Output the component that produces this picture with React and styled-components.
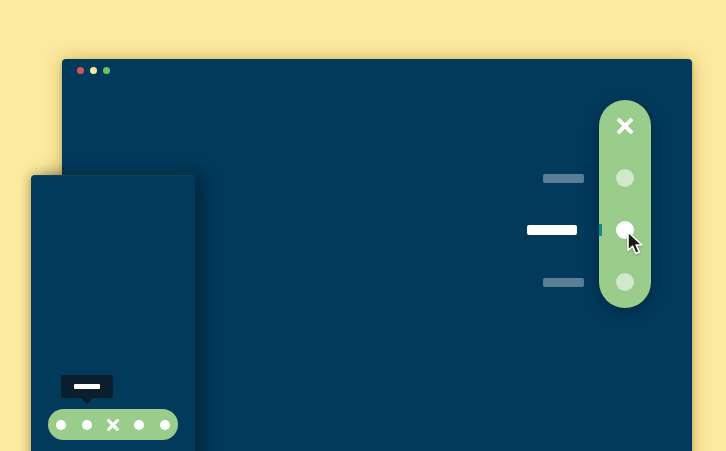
import React from "react";
import styled, { createGlobalStyle } from "styled-components";

const GlobalStyle = createGlobalStyle`
  html, body {
    margin: 0;
    padding: 0;
    background: #fcea9e;
    font-family: "Liberation Sans", Arial, sans-serif;
  }
`;

const Stage = styled.div`
  position: relative;
  width: 726px;
  height: 451px;
  overflow: hidden;
  background: #fcea9e;
`;

const DesktopWindow = styled.div`
  position: absolute;
  left: 62px;
  top: 59px;
  width: 630px;
  height: 420px;
  background: #023a5c;
  border-radius: 4px;
  box-shadow: 0 0 18px rgba(120, 90, 0, 0.35), 0 2px 4px rgba(0, 0, 0, 0.2);
  display: flex;
  flex-direction: column;
`;

const TitleBar = styled.div`
  height: 22px;
  padding-left: 15px;
  display: flex;
  align-items: center;
  gap: 6px;
`;

const Light = styled.span`
  width: 7px;
  height: 7px;
  border-radius: 50%;
  background: ${(p) => p.color};
`;

const Body = styled.div`
  display: flex;
  justify-content: flex-end;
  padding: 19px 41px 0 0;
`;

const SideNav = styled.nav`
  display: flex;
`;

const Labels = styled.div`
  display: flex;
  flex-direction: column;
  position: relative;
  z-index: 2;
`;

const LabelRow = styled.div`
  height: 52px;
  display: flex;
  align-items: center;
  justify-content: flex-end;
`;

const LabelBar = styled.span`
  width: ${(p) => (p.active ? 50 : 41)}px;
  height: ${(p) => (p.active ? 10 : 9)}px;
  border-radius: 2px;
  background: ${(p) => (p.active ? "#ffffff" : "rgba(255, 255, 255, 0.35)")};
  margin-right: ${(p) => (p.active ? 22 : 15)}px;
`;

const Tick = styled.span`
  width: 3px;
  height: 12px;
  background: #0a8f86;
  margin-right: -3px;
`;

const VerticalPill = styled.div`
  position: relative;
  width: 52px;
  border-radius: 26px;
  background: #9acc8b;
  box-shadow: 0 4px 18px rgba(0, 0, 0, 0.3);
  display: flex;
  flex-direction: column;
`;

const PillItem = styled.div`
  position: relative;
  height: 52px;
  display: flex;
  align-items: center;
  justify-content: center;
`;

const Dot = styled.span`
  width: ${(p) => p.size}px;
  height: ${(p) => p.size}px;
  border-radius: 50%;
  background: ${(p) => (p.dim ? "rgba(255, 255, 255, 0.55)" : "#ffffff")};
`;

const Cursor = styled.svg`
  position: absolute;
  left: 27px;
  top: 26px;
  filter: drop-shadow(0 1px 1px rgba(0, 0, 0, 0.25));
`;

const MobileWindow = styled.div`
  position: absolute;
  left: 31px;
  top: 175px;
  width: 164px;
  height: 320px;
  background: #023a5c;
  border-radius: 4px;
  border-top: 1px solid #0b4467;
  box-sizing: border-box;
  box-shadow: 8px 0 18px rgba(0, 10, 25, 0.45), -2px 0 10px rgba(120, 90, 0, 0.3);
  padding: 199px 17px 0;
  display: flex;
  flex-direction: column;
`;

const Tooltip = styled.div`
  position: relative;
  margin-left: 13px;
  width: 52px;
  height: 23px;
  border-radius: 2px;
  background: #0b1e2d;
  display: flex;
  align-items: center;
  justify-content: center;

  &::after {
    content: "";
    position: absolute;
    left: 50%;
    bottom: -6px;
    margin-left: -6px;
    border-left: 6px solid transparent;
    border-right: 6px solid transparent;
    border-top: 6px solid #0b1e2d;
  }
`;

const TooltipText = styled.span`
  width: 26px;
  height: 5px;
  background: #ffffff;
  border-radius: 1px;
`;

const Dock = styled.div`
  margin-top: 11px;
  width: 130px;
  height: 31px;
  border-radius: 16px;
  background: #9acc8b;
  display: flex;
  align-items: center;
`;

const DockItem = styled.div`
  width: 26px;
  display: flex;
  align-items: center;
  justify-content: center;
`;

const CloseIcon = ({ size, width }) => (
  <svg width={size} height={size} viewBox="0 0 14 14">
    <path
      d="M2 2 L12 12 M12 2 L2 12"
      stroke="#ffffff"
      strokeWidth={width}
      strokeLinecap="square"
      fill="none"
    />
  </svg>
);

const ArrowCursor = () => (
  <Cursor width="18" height="26" viewBox="0 0 18 26">
    <path
      d="M2 2 L2 20.5 L6.6 16.2 L9.8 23.4 L13.2 21.9 L10.1 15 L16 15 Z"
      fill="#1a1a1a"
      stroke="#ffffff"
      strokeWidth="1.6"
      strokeLinejoin="round"
    />
  </Cursor>
);

export default function App() {
  return (
    <Stage>
      <GlobalStyle />
      <DesktopWindow>
        <TitleBar>
          <Light color="#d9534f" />
          <Light color="#fbe9a2" />
          <Light color="#6cc16a" />
        </TitleBar>
        <Body>
          <SideNav>
            <Labels>
              <LabelRow />
              <LabelRow>
                <LabelBar />
              </LabelRow>
              <LabelRow>
                <LabelBar active />
                <Tick />
              </LabelRow>
              <LabelRow>
                <LabelBar />
              </LabelRow>
            </Labels>
            <VerticalPill>
              <PillItem>
                <CloseIcon size={16} width={3.4} />
              </PillItem>
              <PillItem>
                <Dot size={18} dim />
              </PillItem>
              <PillItem>
                <Dot size={18} />
                <ArrowCursor />
              </PillItem>
              <PillItem>
                <Dot size={18} dim />
              </PillItem>
            </VerticalPill>
          </SideNav>
        </Body>
      </DesktopWindow>

      <MobileWindow>
        <Tooltip>
          <TooltipText />
        </Tooltip>
        <Dock>
          <DockItem>
            <Dot size={10} />
          </DockItem>
          <DockItem>
            <Dot size={10} />
          </DockItem>
          <DockItem>
            <CloseIcon size={12} width={3.6} />
          </DockItem>
          <DockItem>
            <Dot size={10} />
          </DockItem>
          <DockItem>
            <Dot size={10} />
          </DockItem>
        </Dock>
      </MobileWindow>
    </Stage>
  );
}
